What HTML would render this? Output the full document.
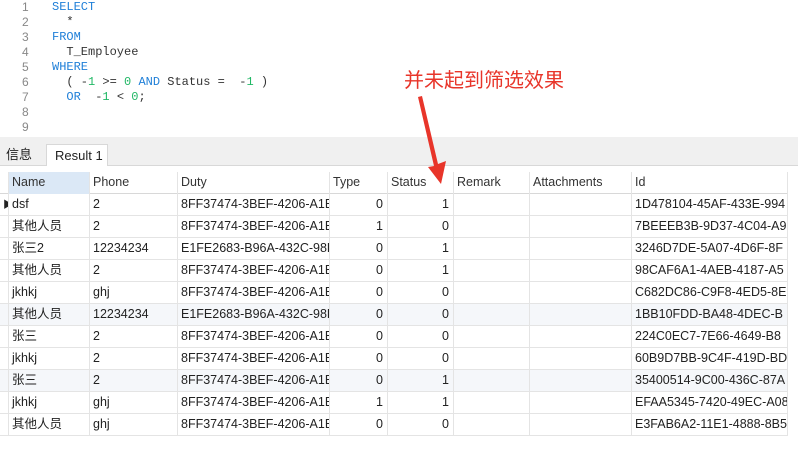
<!DOCTYPE html>
<html><head><meta charset="utf-8"><style>
*{margin:0;padding:0;box-sizing:border-box}
body{width:798px;height:450px;overflow:hidden;background:#fff;font-family:"Liberation Sans","Noto Sans CJK SC",sans-serif;position:relative}
.code{position:absolute;left:0;top:0;width:798px;height:137px;background:#fff;font-family:"Liberation Mono","DejaVu Sans Mono",monospace;font-size:12px;color:#333}
.ln{position:absolute;left:22px;width:12px;color:#888;font-family:"Liberation Sans",sans-serif;font-size:12px}
.cl{position:absolute;left:52px;white-space:pre}
.k{color:#1f7fd8}.n{color:#22b866}
.sep{position:absolute;left:0;top:137px;width:798px;height:4px;background:#f0f0f0}
.tabs{position:absolute;left:0;top:141px;width:798px;height:25px;background:#f0f0f0;border-bottom:1px solid #d8d8d8}
.tab{position:absolute;top:3px;height:23px;font-size:13px;line-height:22px;color:#222}
.grid{position:absolute;left:0;top:166px;width:798px;height:284px;background:#fff}
.row{position:absolute;left:0;height:22px;width:788px;border-bottom:1px solid #e4e4e4}
.c{position:absolute;top:0;height:22px;line-height:21px;font-size:12.5px;color:#222;white-space:nowrap;overflow:hidden;border-right:1px solid #e4e4e4;padding-left:3px}
.r{text-align:right;padding-right:4px;padding-left:0}
.hdr .c{color:#333}
</style></head><body>
<div class="code">
<div class="ln" style="top:0">1</div><div class="cl k" style="top:0">SELECT</div>
<div class="ln" style="top:15px">2</div><div class="cl" style="top:15px">  *</div>
<div class="ln" style="top:30px">3</div><div class="cl k" style="top:30px">FROM</div>
<div class="ln" style="top:45px">4</div><div class="cl" style="top:45px">  T_Employee</div>
<div class="ln" style="top:60px">5</div><div class="cl k" style="top:60px">WHERE</div>
<div class="ln" style="top:75px">6</div><div class="cl" style="top:75px">  ( -<span class="n">1</span> &gt;= <span class="n">0</span> <span class="k">AND</span> Status =  -<span class="n">1</span> )</div>
<div class="ln" style="top:90px">7</div><div class="cl" style="top:90px">  <span class="k">OR</span>  -<span class="n">1</span> &lt; <span class="n">0</span>;</div>
<div class="ln" style="top:105px">8</div>
<div class="ln" style="top:120px">9</div>
</div>
<div class="sep"></div>
<div class="tabs">
<div class="tab" style="left:0;width:46px;padding-left:6px">信息</div>
<div class="tab" style="left:46px;width:62px;background:#fff;border:1px solid #d8d8d8;border-bottom:none;padding-left:8px;height:23px">Result 1</div>
</div>
<div class="grid" id="g"></div>
<div style="position:absolute;left:404px;top:66px;font-size:20px;color:#e8352a;font-family:'Noto Sans CJK SC',sans-serif;line-height:26px;z-index:5">并未起到筛选效果</div>
<svg style="position:absolute;left:0;top:0;z-index:6" width="798" height="450"><polygon points="418,97 422,96 438,164 446,161 441,184 428,167 434,166" fill="#e8352a"/></svg>
<script>
var cols=[[0,9],[9,90],[90,178],[178,330],[330,388],[388,454],[454,530],[530,632],[632,788]];
var H=['','Name','Phone','Duty','Type','Status','Remark','Attachments','Id'];
var D=[["dsf","2","8FF37474-3BEF-4206-A1E","0","1","1D478104-45AF-433E-994"],
["其他人员","2","8FF37474-3BEF-4206-A1E","1","0","7BEEEB3B-9D37-4C04-A9"],
["张三2","12234234","E1FE2683-B96A-432C-98D","0","1","3246D7DE-5A07-4D6F-8F"],
["其他人员","2","8FF37474-3BEF-4206-A1E","0","1","98CAF6A1-4AEB-4187-A5"],
["jkhkj","ghj","8FF37474-3BEF-4206-A1E","0","0","C682DC86-C9F8-4ED5-8E"],
["其他人员","12234234","E1FE2683-B96A-432C-98D","0","0","1BB10FDD-BA48-4DEC-B"],
["张三","2","8FF37474-3BEF-4206-A1E","0","0","224C0EC7-7E66-4649-B8"],
["jkhkj","2","8FF37474-3BEF-4206-A1E","0","0","60B9D7BB-9C4F-419D-BD"],
["张三","2","8FF37474-3BEF-4206-A1E","0","1","35400514-9C00-436C-87A"],
["jkhkj","ghj","8FF37474-3BEF-4206-A1E","1","1","EFAA5345-7420-49EC-A08"],
["其他人员","ghj","8FF37474-3BEF-4206-A1E","0","0","E3FAB6A2-11E1-4888-8B5"]];
var h='';
function cell(i,t,cls,bg){var c=cols[i];return '<div class="c '+(cls||'')+'" style="left:'+c[0]+'px;width:'+(c[1]-c[0])+'px;'+(bg?'background:'+bg:'')+'">'+t+'</div>';}
h+='<div class="row hdr" style="top:6px;border-bottom:1px solid #d8d8d8">';
for(var i=0;i<9;i++)h+=cell(i,H[i],'',i==1?'#dbe8f6':'');
h+='</div>';
for(var r=0;r<D.length;r++){var d=D[r];var bg=(r==5||r==8)?'background:#f5f7fa;':'';
h+='<div class="row" style="top:'+(28+r*22)+'px;'+bg+'">';
h+=cell(0,r==0?'<span style="font-size:10px">&#9654;</span>':'');
h+=cell(1,d[0])+cell(2,d[1])+cell(3,d[2])+cell(4,d[3],'r')+cell(5,d[4],'r')+cell(6,'')+cell(7,'')+cell(8,d[5]);
h+='</div>';}
document.getElementById('g').innerHTML=h;
</script>
</body></html>
